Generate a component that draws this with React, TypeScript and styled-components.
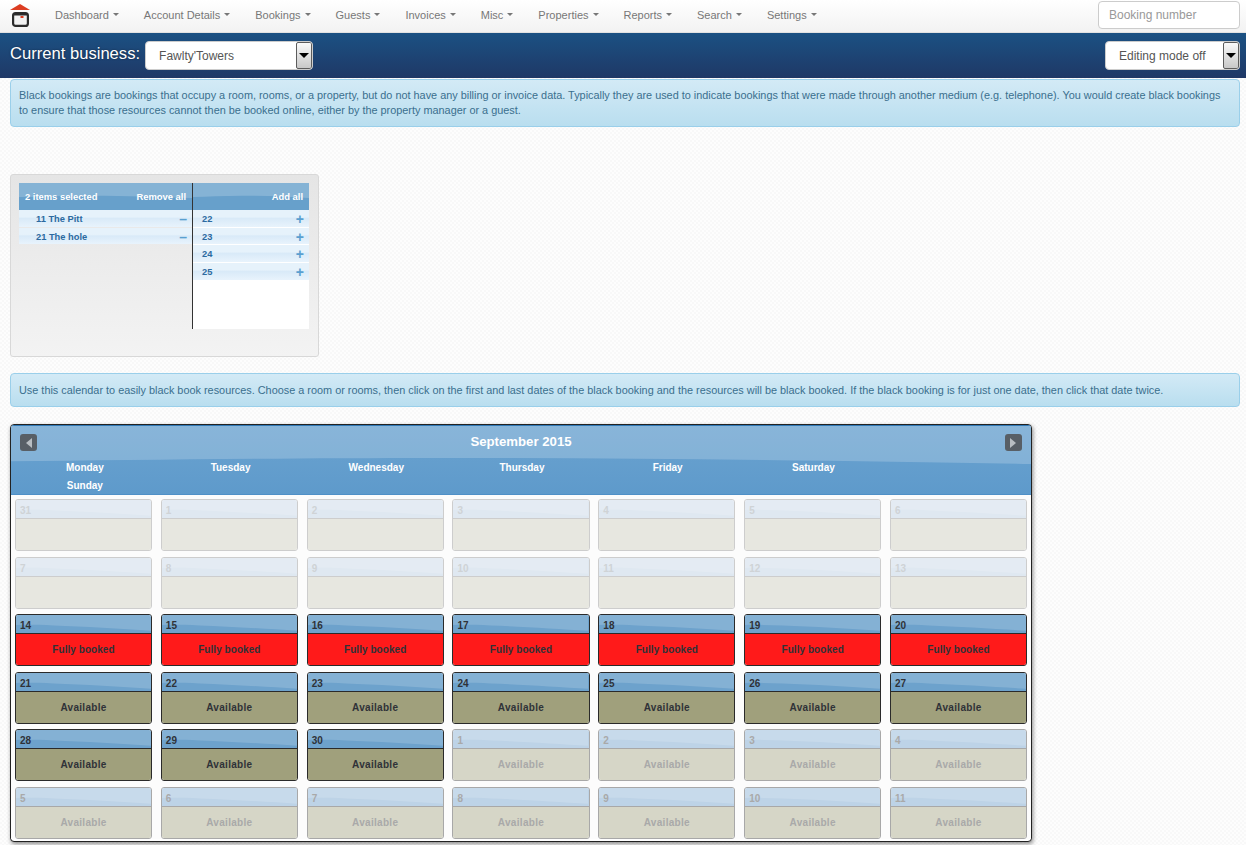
import { ReactNode } from 'react'
import styled, { createGlobalStyle } from 'styled-components'

const navItems = [
  'Dashboard',
  'Account Details',
  'Bookings',
  'Guests',
  'Invoices',
  'Misc',
  'Properties',
  'Reports',
  'Search',
  'Settings',
]

const weekDays = ['Monday', 'Tuesday', 'Wednesday', 'Thursday', 'Friday', 'Saturday', 'Sunday']

type CellKind = 'past' | 'booked' | 'open' | 'next'

const cells: { day: number; kind: CellKind }[] = [
  ...[31, 1, 2, 3, 4, 5, 6, 7, 8, 9, 10, 11, 12, 13].map((day) => ({ day, kind: 'past' as CellKind })),
  ...[14, 15, 16, 17, 18, 19, 20].map((day) => ({ day, kind: 'booked' as CellKind })),
  ...[21, 22, 23, 24, 25, 26, 27, 28, 29, 30].map((day) => ({ day, kind: 'open' as CellKind })),
  ...[1, 2, 3, 4, 5, 6, 7, 8, 9, 10, 11].map((day) => ({ day, kind: 'next' as CellKind })),
]

const cellLabel: Record<CellKind, string> = {
  past: '',
  booked: 'Fully booked',
  open: 'Available',
  next: 'Available',
}

const WIDE_WAVE = 'M0 0H100V56C82 51 62 47 42 47C26 47 12 50 0 52Z'
const CELL_WAVE = 'M0 0H100V88C78 76 50 64 28 58C18 55 8 54 0 55Z'

const Wave = ({ d = WIDE_WAVE, strength = 0.2 }: { d?: string; strength?: number }) => (
  <WaveSvg viewBox="0 0 100 100" preserveAspectRatio="none">
    <path d={d} fill="#fff" fillOpacity={strength} />
  </WaveSvg>
)

const Arrow = ({ left }: { left?: boolean }) => (
  <svg width="6" height="10" viewBox="0 0 6 10">
    <path d={left ? 'M6 0V10L0 5Z' : 'M0 0V10L6 5Z'} fill="#b9bec2" />
  </svg>
)

const Select = ({ wide, children }: { wide?: boolean; children: ReactNode }) => (
  <SelectBox $wide={wide}>
    <SelectText>{children}</SelectText>
    <SelectButton>
      <SelectArrow />
    </SelectButton>
  </SelectBox>
)

export default function App() {
  return (
    <>
      <GlobalStyle />
      <NavBar>
        <Logo width="20" height="23" viewBox="0 0 20 23">
          <path d="M10 0L20 6H0Z" fill="#dc3d22" />
          <rect x="3.1" y="9.1" width="14.8" height="12.8" rx="2.5" fill="#f2f2f2" stroke="#2b2b2b" strokeWidth="2.2" />
          <rect x="4" y="9.5" width="13" height="2" fill="#2b2b2b" />
          <rect x="10.5" y="12" width="3" height="2" fill="#dc3d22" />
        </Logo>
        <NavList>
          {navItems.map((item) => (
            <NavItem key={item}>
              {item}
              <Caret />
            </NavItem>
          ))}
        </NavList>
        <BookingInput placeholder="Booking number" />
      </NavBar>

      <BusinessBar>
        <BusinessLeft>
          <BusinessLabel>Current business:</BusinessLabel>
          <Select>Fawlty'Towers</Select>
        </BusinessLeft>
        <Select wide>Editing mode off</Select>
      </BusinessBar>

      <Main>
        <Alert>
          Black bookings are bookings that occupy a room, rooms, or a property, but do not have any billing or invoice
          data. Typically they are used to indicate bookings that were made through another medium (e.g. telephone). You
          would create black bookings to ensure that those resources cannot then be booked online, either by the property
          manager or a guest.
        </Alert>

        <Picker>
          <PickerInner>
            <PickerColumn>
              <PickerHead>
                <Wave />
                <span>2 items selected</span>
                <span>Remove all</span>
              </PickerHead>
              <PickerRow $indent>
                <span>11 The Pitt</span>
                <RowSign>–</RowSign>
              </PickerRow>
              <PickerRow $indent>
                <span>21 The hole</span>
                <RowSign>–</RowSign>
              </PickerRow>
            </PickerColumn>
            <PickerColumn $right>
              <PickerHead>
                <Wave />
                <span />
                <span>Add all</span>
              </PickerHead>
              {[22, 23, 24, 25].map((room) => (
                <PickerRow key={room}>
                  <span>{room}</span>
                  <RowSign>+</RowSign>
                </PickerRow>
              ))}
            </PickerColumn>
          </PickerInner>
        </Picker>

        <AlertSecond>
          Use this calendar to easily black book resources. Choose a room or rooms, then click on the first and last
          dates of the black booking and the resources will be black booked. If the black booking is for just one date,
          then click that date twice.
        </AlertSecond>

        <Calendar>
          <CalendarHead>
            <Wave />
            <TitleRow>
              <NavButton>
                <Arrow left />
              </NavButton>
              <MonthTitle>September 2015</MonthTitle>
              <NavButton>
                <Arrow />
              </NavButton>
            </TitleRow>
            <WeekRow>
              {weekDays.map((day) => (
                <WeekDay key={day}>{day}</WeekDay>
              ))}
            </WeekRow>
          </CalendarHead>
          <CellGrid>
            {cells.map((cell, i) => (
              <Cell key={i} $kind={cell.kind}>
                <CellHead $kind={cell.kind}>
                  <Wave d={CELL_WAVE} strength={0.16} />
                  <CellDay>{cell.day}</CellDay>
                </CellHead>
                <CellBody $kind={cell.kind}>{cellLabel[cell.kind]}</CellBody>
              </Cell>
            ))}
          </CellGrid>
        </Calendar>
      </Main>
    </>
  )
}

const GlobalStyle = createGlobalStyle`
  html, body {
    margin: 0;
    height: 845px;
    overflow: hidden;
  }
  body {
    font-family: "Liberation Sans", Arial, sans-serif;
    background-color: #fdfdfd;
    background-image: conic-gradient(#f8f8f8 25%, transparent 0 50%, #f8f8f8 0 75%, transparent 0);
    background-size: 4px 4px;
  }
`

const WaveSvg = styled.svg`
  position: absolute;
  inset: 0;
  width: 100%;
  height: 100%;
  pointer-events: none;
`

const NavBar = styled.div`
  height: 33px;
  box-sizing: border-box;
  padding: 0 6px 0 10px;
  display: flex;
  align-items: center;
  background: linear-gradient(#ffffff, #f2f2f2);
  border-bottom: 1px solid #e2e2e2;
`

const Logo = styled.svg`
  flex: none;
  margin-top: -2px;
`

const NavList = styled.div`
  display: flex;
  flex: 1;
  margin-left: 12.5px;
`

const NavItem = styled.div`
  display: flex;
  align-items: center;
  padding: 0 12.5px;
  font-size: 11px;
  color: #777;
  margin-top: -3px;
`

const Caret = styled.span`
  margin-left: 4px;
  border-top: 3px solid #777;
  border-left: 3px solid transparent;
  border-right: 3px solid transparent;
`

const BookingInput = styled.input`
  width: 142px;
  height: 28px;
  box-sizing: border-box;
  margin-top: -3px;
  padding: 0 10px;
  border: 1px solid #ccc;
  border-radius: 4px;
  background: #fff;
  font-family: inherit;
  font-size: 12px;
  &::placeholder {
    color: #999;
  }
`

const BusinessBar = styled.div`
  height: 45px;
  box-sizing: border-box;
  padding: 8px 6px 0 10px;
  display: flex;
  justify-content: space-between;
  background: linear-gradient(#1b5183, #1f3866);
`

const BusinessLeft = styled.div`
  display: flex;
  gap: 5px;
`

const BusinessLabel = styled.div`
  font-size: 16.6px;
  line-height: 26px;
  color: #fff;
  text-shadow: 0 0 2px rgba(0, 0, 0, 0.5);
`

const SelectBox = styled.div<{ $wide?: boolean }>`
  width: ${({ $wide }) => ($wide ? '135px' : '168px')};
  height: 29px;
  box-sizing: border-box;
  display: flex;
  background: #fff;
  border: 1px solid #ccc;
  border-radius: 4px;
  overflow: hidden;
`

const SelectText = styled.div`
  flex: 1;
  padding-left: 13px;
  font-size: 12px;
  line-height: 28px;
  color: #555;
`

const SelectButton = styled.div`
  width: 16px;
  box-sizing: border-box;
  display: flex;
  align-items: center;
  justify-content: center;
  border: 1px solid #5c5c5c;
  border-radius: 2px;
  background: linear-gradient(#fafafa, #c8c8c8);
`

const SelectArrow = styled.span`
  border-top: 5px solid #000;
  border-left: 5px solid transparent;
  border-right: 5px solid transparent;
`

const Main = styled.div`
  padding: 1px 6px 0 10px;
`

const Alert = styled.div`
  box-sizing: border-box;
  height: 48px;
  padding: 8px;
  font-size: 10.88px;
  line-height: 15px;
  color: #3a6f8e;
  background: linear-gradient(#d3eaf6, #b9deef);
  border: 1px solid #9acfea;
  border-radius: 4px;
`

const AlertSecond = styled(Alert)`
  height: 34px;
  margin-top: 16px;
  padding-top: 9px;
`

const Picker = styled.div`
  width: 309px;
  height: 183px;
  box-sizing: border-box;
  margin-top: 47px;
  padding: 8px;
  border: 1px solid #d8d8d8;
  border-radius: 3px;
  background: linear-gradient(#e5e5e5, #f3f3f3);
`

const PickerInner = styled.div`
  display: flex;
  height: 146px;
`

const PickerColumn = styled.div<{ $right?: boolean }>`
  box-sizing: border-box;
  width: ${({ $right }) => ($right ? '117px' : '173px')};
  background: ${({ $right }) => ($right ? '#fff' : 'transparent')};
  border-left: ${({ $right }) => ($right ? '1px solid #333' : 'none')};
`

const PickerHead = styled.div`
  position: relative;
  height: 27px;
  padding: 0 6px;
  display: flex;
  align-items: center;
  justify-content: space-between;
  font-size: 9.4px;
  font-weight: bold;
  color: #fff;
  background: #67a0cb;
  & > span {
    position: relative;
  }
`

const PickerRow = styled.div<{ $indent?: boolean }>`
  height: 16.7px;
  box-sizing: border-box;
  margin-bottom: 1px;
  padding: 1px 5px 0 ${({ $indent }) => ($indent ? '17px' : '9px')};
  display: flex;
  align-items: center;
  justify-content: space-between;
  font-size: 9.3px;
  font-weight: bold;
  color: #2c6aa0;
  background: linear-gradient(#e6f2fb 40%, #d9eaf8 50%, #e8f3fc);
`

const RowSign = styled.span`
  font-size: 14px;
  color: #5a9fd0;
`

const Calendar = styled.div`
  width: 1022px;
  height: 418px;
  box-sizing: border-box;
  margin-top: 17px;
  background: #fff;
  border: 1px solid #222;
  border-radius: 4px;
  box-shadow: 1px 2px 4px rgba(0, 0, 0, 0.45);
  overflow: hidden;
`

const CalendarHead = styled.div`
  position: relative;
  height: 70px;
  color: #fff;
  background: linear-gradient(#6ba3d0, #5e9acb);
  border-top: 1px solid #2f78b5;
  border-bottom: 1px solid #4f90c7;
  box-sizing: border-box;
`

const TitleRow = styled.div`
  position: relative;
  height: 33px;
  padding: 8px 9px 0;
  display: flex;
  justify-content: space-between;
  box-sizing: border-box;
`

const NavButton = styled.div`
  width: 17px;
  height: 17px;
  display: flex;
  align-items: center;
  justify-content: center;
  border-radius: 3px;
  background: #585f66;
`

const MonthTitle = styled.div`
  font-size: 13.2px;
  font-weight: bold;
  line-height: 16px;
`

const WeekRow = styled.div`
  position: relative;
  display: flex;
  flex-wrap: wrap;
  padding-left: 1px;
`

const WeekDay = styled.div`
  width: 14.3%;
  height: 18px;
  text-align: center;
  font-size: 10px;
  font-weight: bold;
  line-height: 18px;
`

const CellGrid = styled.div`
  display: grid;
  grid-template-columns: repeat(7, 1fr);
  grid-auto-rows: 52px;
  column-gap: 8.83px;
  row-gap: 5.6px;
  padding: 4px 4px 0;
  background: #fcfcfc;
`

const cellBorder: Record<CellKind, string> = {
  past: '#cdcdcd',
  booked: '#2a2a2a',
  open: '#2a2a2a',
  next: '#a8a8a8',
}

const headBackground: Record<CellKind, string> = {
  past: '#dfe8f1',
  booked: '#6da2cc',
  open: '#6da2cc',
  next: '#bdd3e7',
}

const bodyBackground: Record<CellKind, string> = {
  past: '#e7e7e0',
  booked: '#ff1a1a',
  open: '#a0a07c',
  next: '#d6d6c7',
}

const cellText: Record<CellKind, string> = {
  past: '#cfd3d6',
  booked: '#2f3238',
  open: '#2f3238',
  next: '#a9a9a9',
}

const Cell = styled.div<{ $kind: CellKind }>`
  box-sizing: border-box;
  border: 1px solid ${({ $kind }) => cellBorder[$kind]};
  border-radius: 3px;
  overflow: hidden;
  color: ${({ $kind }) => cellText[$kind]};
`

const CellHead = styled.div<{ $kind: CellKind }>`
  position: relative;
  height: 19px;
  box-sizing: border-box;
  padding-left: 4px;
  border-bottom: 1px solid ${({ $kind }) => cellBorder[$kind]};
  background: ${({ $kind }) => headBackground[$kind]};
`

const CellDay = styled.span`
  position: relative;
  font-size: 10px;
  font-weight: bold;
  line-height: 18px;
`

const CellBody = styled.div<{ $kind: CellKind }>`
  height: 31px;
  text-align: center;
  font-size: 10px;
  font-weight: bold;
  letter-spacing: ${({ $kind }) => ($kind === 'booked' ? '0.05px' : '0.3px')};
  line-height: 31px;
  background: ${({ $kind }) => bodyBackground[$kind]};
`
